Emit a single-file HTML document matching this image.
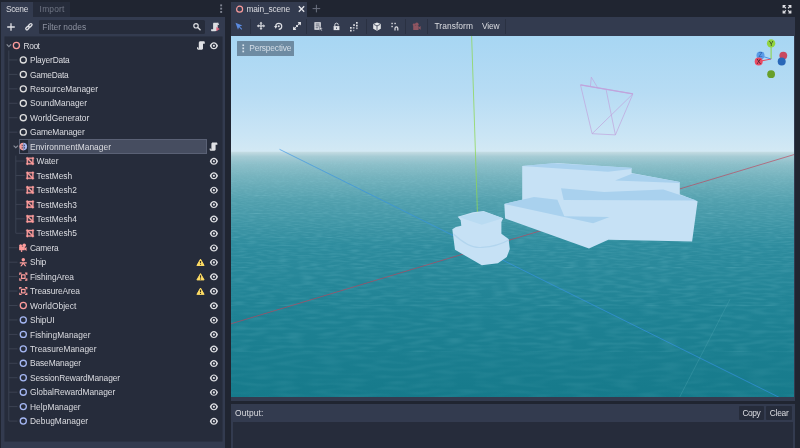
<!DOCTYPE html>
<html><head><meta charset="utf-8"><title>Godot Editor - main_scene</title>
<style>
html,body{margin:0;padding:0}
body{width:800px;height:448px;overflow:hidden;background:#202531;position:relative;font-family:"Liberation Sans",sans-serif;font-size:8.4px;color:#dcdde1;-webkit-font-smoothing:antialiased}
.abs{position:absolute}
div{position:absolute;box-sizing:border-box}
.t{white-space:nowrap;line-height:13px;height:13px;color:#dcdde2}
.dim{color:#7d8290}
</style></head><body>
<div id="app" style="left:0;top:0;width:800px;height:448px;will-change:transform">
<!-- LEFT DOCK -->
<div style="left:1px;top:2px;width:32px;height:15px;background:#333b4f"></div>
<div style="left:33px;top:2px;width:36.5px;height:14.7px;background:#262c3b"></div>
<div style="left:1px;top:16.5px;width:224px;height:431.5px;background:#333b4f"></div>
<div class="t" style="left:5.9px;top:3.3px;letter-spacing:-0.33px">Scene</div>
<div class="t dim" style="left:39.6px;top:3.3px;color:#6f7584;letter-spacing:0.208px">Import</div>
<!-- filter box -->
<div style="left:39px;top:19.5px;width:166px;height:14.5px;background:#262c3b;border-radius:1.5px"></div>
<div class="t" style="left:42.3px;top:20.85px;color:#8d92a0;letter-spacing:0.003px">Filter nodes</div>
<!-- tree -->
<div style="left:3.5px;top:36.3px;width:219.4px;height:406.2px;background:#262c3b;border:0.6px solid #2b3243;border-radius:1.5px"></div>
<div style="left:18.75px;top:138.87px;width:188.5px;height:14.7px;background:#464d60;border:0.7px solid #5a6175"></div><div style="left:20.2px;top:139.62px;width:7.7px;height:13.2px;background:#242a38"></div>
<svg class="abs" style="left:0;top:0" width="240" height="448" viewBox="0 0 240 448"><path d="M8.8 50.5V421.07" stroke="#414858" stroke-width="0.8" fill="none"/><path d="M8.8 59.95H17.5" stroke="#414858" stroke-width="0.8"/><path d="M8.8 74.39H17.5" stroke="#414858" stroke-width="0.8"/><path d="M8.8 88.84H17.5" stroke="#414858" stroke-width="0.8"/><path d="M8.8 103.28H17.5" stroke="#414858" stroke-width="0.8"/><path d="M8.8 117.72H17.5" stroke="#414858" stroke-width="0.8"/><path d="M8.8 132.17H17.5" stroke="#414858" stroke-width="0.8"/><path d="M15.8 161.06H24.8" stroke="#414858" stroke-width="0.8"/><path d="M15.8 175.5H24.8" stroke="#414858" stroke-width="0.8"/><path d="M15.8 189.95H24.8" stroke="#414858" stroke-width="0.8"/><path d="M15.8 204.4H24.8" stroke="#414858" stroke-width="0.8"/><path d="M15.8 218.84H24.8" stroke="#414858" stroke-width="0.8"/><path d="M15.8 233.28H24.8" stroke="#414858" stroke-width="0.8"/><path d="M8.8 247.73H17.5" stroke="#414858" stroke-width="0.8"/><path d="M8.8 262.18H17.5" stroke="#414858" stroke-width="0.8"/><path d="M8.8 276.62H17.5" stroke="#414858" stroke-width="0.8"/><path d="M8.8 291.06H17.5" stroke="#414858" stroke-width="0.8"/><path d="M8.8 305.51H17.5" stroke="#414858" stroke-width="0.8"/><path d="M8.8 319.95H17.5" stroke="#414858" stroke-width="0.8"/><path d="M8.8 334.4H17.5" stroke="#414858" stroke-width="0.8"/><path d="M8.8 348.85H17.5" stroke="#414858" stroke-width="0.8"/><path d="M8.8 363.29H17.5" stroke="#414858" stroke-width="0.8"/><path d="M8.8 377.74H17.5" stroke="#414858" stroke-width="0.8"/><path d="M8.8 392.18H17.5" stroke="#414858" stroke-width="0.8"/><path d="M8.8 406.62H17.5" stroke="#414858" stroke-width="0.8"/><path d="M8.8 421.07H17.5" stroke="#414858" stroke-width="0.8"/><path d="M15.8 155.62V233.28" stroke="#414858" stroke-width="0.8" fill="none"/><circle cx="16.4" cy="45.5" r="3.05" fill="none" stroke="#fc9c9c" stroke-width="1.3"/><g transform="translate(195.80,40.70) scale(0.6)"><path d="m6 1v1c-.55 0-1 .45-1 1v10h-1v-2h-2v2c0 .357.19.687.5.865.15.088.32.135.5.135v1h7c1.1 0 2-.9 2-2v-8h3v-2c0-1.1-.9-2-2-2z" fill="#e0e1e5"/></g><g transform="translate(209.26,41.06) scale(0.58)"><path d="m8 2c-3.08 0-5.83 2.2-6.95 5.64-.08.23-.08.49 0 .72 1.12 3.44 3.87 5.64 6.95 5.64s5.83-2.2 6.95-5.64c.08-.23.08-.49 0-.72-1.12-3.44-3.87-5.64-6.95-5.64zm0 2c2.21 0 4 1.79 4 4s-1.79 4-4 4-4-1.79-4-4 1.79-4 4-4zm0 2.2c-1 0-1.8.8-1.8 1.8s.8 1.8 1.8 1.8 1.8-.8 1.8-1.8-.8-1.8-1.8-1.8z" fill="#e0e1e5" fill-rule="evenodd"/></g><circle cx="23.3" cy="59.95" r="3.05" fill="none" stroke="#e0e0e0" stroke-width="1.3"/><circle cx="23.3" cy="74.39" r="3.05" fill="none" stroke="#e0e0e0" stroke-width="1.3"/><circle cx="23.3" cy="88.84" r="3.05" fill="none" stroke="#e0e0e0" stroke-width="1.3"/><circle cx="23.3" cy="103.28" r="3.05" fill="none" stroke="#e0e0e0" stroke-width="1.3"/><circle cx="23.3" cy="117.72" r="3.05" fill="none" stroke="#e0e0e0" stroke-width="1.3"/><circle cx="23.3" cy="132.17" r="3.05" fill="none" stroke="#e0e0e0" stroke-width="1.3"/><path d="M23.3 142.82a3.8 3.8 0 0 0 0 7.6z" fill="#f7a1a1"/><path d="M23.3 142.82a3.8 3.8 0 0 1 0 7.6z" fill="#a7b8f2"/><path d="M22.2 144.72v1.5M22.2 147.12v1.5M24.400000000000002 144.72v1.5M24.400000000000002 147.12v1.5" stroke="#3a3550" stroke-width="0.9" fill="none"/><g transform="translate(208.40,141.82) scale(0.6)"><path d="m6 1v1c-.55 0-1 .45-1 1v10h-1v-2h-2v2c0 .357.19.687.5.865.15.088.32.135.5.135v1h7c1.1 0 2-.9 2-2v-8h3v-2c0-1.1-.9-2-2-2z" fill="#e0e1e5"/></g><g transform="translate(25.70,156.66) scale(0.55)"><path d="m3 1a2 2 0 0 0 -2 2 2 2 0 0 0 1 1.73v6.54a2 2 0 0 0 -1 1.73 2 2 0 0 0 2 2 2 2 0 0 0 1.73-1h6.54a2 2 0 0 0 1.73 1 2 2 0 0 0 2-2 2 2 0 0 0 -1-1.73v-6.54a2 2 0 0 0 1-1.73 2 2 0 0 0 -2-2 2 2 0 0 0 -1.73 1h-6.54a2 2 0 0 0 -1.73-1zm8.27 3a2 2 0 0 0 .73.73v5.86l-6.59-6.59zm-7.27 1.41l6.59 6.59h-5.86a2 2 0 0 0 -.73-.73z" fill="#fc9c9c" fill-rule="evenodd" stroke="#fc9c9c" stroke-width="0.7" stroke-linejoin="round"/></g><g transform="translate(209.26,156.62) scale(0.58)"><path d="m8 2c-3.08 0-5.83 2.2-6.95 5.64-.08.23-.08.49 0 .72 1.12 3.44 3.87 5.64 6.95 5.64s5.83-2.2 6.95-5.64c.08-.23.08-.49 0-.72-1.12-3.44-3.87-5.64-6.95-5.64zm0 2c2.21 0 4 1.79 4 4s-1.79 4-4 4-4-1.79-4-4 1.79-4 4-4zm0 2.2c-1 0-1.8.8-1.8 1.8s.8 1.8 1.8 1.8 1.8-.8 1.8-1.8-.8-1.8-1.8-1.8z" fill="#e0e1e5" fill-rule="evenodd"/></g><g transform="translate(25.70,171.10) scale(0.55)"><path d="m3 1a2 2 0 0 0 -2 2 2 2 0 0 0 1 1.73v6.54a2 2 0 0 0 -1 1.73 2 2 0 0 0 2 2 2 2 0 0 0 1.73-1h6.54a2 2 0 0 0 1.73 1 2 2 0 0 0 2-2 2 2 0 0 0 -1-1.73v-6.54a2 2 0 0 0 1-1.73 2 2 0 0 0 -2-2 2 2 0 0 0 -1.73 1h-6.54a2 2 0 0 0 -1.73-1zm8.27 3a2 2 0 0 0 .73.73v5.86l-6.59-6.59zm-7.27 1.41l6.59 6.59h-5.86a2 2 0 0 0 -.73-.73z" fill="#fc9c9c" fill-rule="evenodd" stroke="#fc9c9c" stroke-width="0.7" stroke-linejoin="round"/></g><g transform="translate(209.26,171.06) scale(0.58)"><path d="m8 2c-3.08 0-5.83 2.2-6.95 5.64-.08.23-.08.49 0 .72 1.12 3.44 3.87 5.64 6.95 5.64s5.83-2.2 6.95-5.64c.08-.23.08-.49 0-.72-1.12-3.44-3.87-5.64-6.95-5.64zm0 2c2.21 0 4 1.79 4 4s-1.79 4-4 4-4-1.79-4-4 1.79-4 4-4zm0 2.2c-1 0-1.8.8-1.8 1.8s.8 1.8 1.8 1.8 1.8-.8 1.8-1.8-.8-1.8-1.8-1.8z" fill="#e0e1e5" fill-rule="evenodd"/></g><g transform="translate(25.70,185.55) scale(0.55)"><path d="m3 1a2 2 0 0 0 -2 2 2 2 0 0 0 1 1.73v6.54a2 2 0 0 0 -1 1.73 2 2 0 0 0 2 2 2 2 0 0 0 1.73-1h6.54a2 2 0 0 0 1.73 1 2 2 0 0 0 2-2 2 2 0 0 0 -1-1.73v-6.54a2 2 0 0 0 1-1.73 2 2 0 0 0 -2-2 2 2 0 0 0 -1.73 1h-6.54a2 2 0 0 0 -1.73-1zm8.27 3a2 2 0 0 0 .73.73v5.86l-6.59-6.59zm-7.27 1.41l6.59 6.59h-5.86a2 2 0 0 0 -.73-.73z" fill="#fc9c9c" fill-rule="evenodd" stroke="#fc9c9c" stroke-width="0.7" stroke-linejoin="round"/></g><g transform="translate(209.26,185.51) scale(0.58)"><path d="m8 2c-3.08 0-5.83 2.2-6.95 5.64-.08.23-.08.49 0 .72 1.12 3.44 3.87 5.64 6.95 5.64s5.83-2.2 6.95-5.64c.08-.23.08-.49 0-.72-1.12-3.44-3.87-5.64-6.95-5.64zm0 2c2.21 0 4 1.79 4 4s-1.79 4-4 4-4-1.79-4-4 1.79-4 4-4zm0 2.2c-1 0-1.8.8-1.8 1.8s.8 1.8 1.8 1.8 1.8-.8 1.8-1.8-.8-1.8-1.8-1.8z" fill="#e0e1e5" fill-rule="evenodd"/></g><g transform="translate(25.70,200.00) scale(0.55)"><path d="m3 1a2 2 0 0 0 -2 2 2 2 0 0 0 1 1.73v6.54a2 2 0 0 0 -1 1.73 2 2 0 0 0 2 2 2 2 0 0 0 1.73-1h6.54a2 2 0 0 0 1.73 1 2 2 0 0 0 2-2 2 2 0 0 0 -1-1.73v-6.54a2 2 0 0 0 1-1.73 2 2 0 0 0 -2-2 2 2 0 0 0 -1.73 1h-6.54a2 2 0 0 0 -1.73-1zm8.27 3a2 2 0 0 0 .73.73v5.86l-6.59-6.59zm-7.27 1.41l6.59 6.59h-5.86a2 2 0 0 0 -.73-.73z" fill="#fc9c9c" fill-rule="evenodd" stroke="#fc9c9c" stroke-width="0.7" stroke-linejoin="round"/></g><g transform="translate(209.26,199.96) scale(0.58)"><path d="m8 2c-3.08 0-5.83 2.2-6.95 5.64-.08.23-.08.49 0 .72 1.12 3.44 3.87 5.64 6.95 5.64s5.83-2.2 6.95-5.64c.08-.23.08-.49 0-.72-1.12-3.44-3.87-5.64-6.95-5.64zm0 2c2.21 0 4 1.79 4 4s-1.79 4-4 4-4-1.79-4-4 1.79-4 4-4zm0 2.2c-1 0-1.8.8-1.8 1.8s.8 1.8 1.8 1.8 1.8-.8 1.8-1.8-.8-1.8-1.8-1.8z" fill="#e0e1e5" fill-rule="evenodd"/></g><g transform="translate(25.70,214.44) scale(0.55)"><path d="m3 1a2 2 0 0 0 -2 2 2 2 0 0 0 1 1.73v6.54a2 2 0 0 0 -1 1.73 2 2 0 0 0 2 2 2 2 0 0 0 1.73-1h6.54a2 2 0 0 0 1.73 1 2 2 0 0 0 2-2 2 2 0 0 0 -1-1.73v-6.54a2 2 0 0 0 1-1.73 2 2 0 0 0 -2-2 2 2 0 0 0 -1.73 1h-6.54a2 2 0 0 0 -1.73-1zm8.27 3a2 2 0 0 0 .73.73v5.86l-6.59-6.59zm-7.27 1.41l6.59 6.59h-5.86a2 2 0 0 0 -.73-.73z" fill="#fc9c9c" fill-rule="evenodd" stroke="#fc9c9c" stroke-width="0.7" stroke-linejoin="round"/></g><g transform="translate(209.26,214.40) scale(0.58)"><path d="m8 2c-3.08 0-5.83 2.2-6.95 5.64-.08.23-.08.49 0 .72 1.12 3.44 3.87 5.64 6.95 5.64s5.83-2.2 6.95-5.64c.08-.23.08-.49 0-.72-1.12-3.44-3.87-5.64-6.95-5.64zm0 2c2.21 0 4 1.79 4 4s-1.79 4-4 4-4-1.79-4-4 1.79-4 4-4zm0 2.2c-1 0-1.8.8-1.8 1.8s.8 1.8 1.8 1.8 1.8-.8 1.8-1.8-.8-1.8-1.8-1.8z" fill="#e0e1e5" fill-rule="evenodd"/></g><g transform="translate(25.70,228.88) scale(0.55)"><path d="m3 1a2 2 0 0 0 -2 2 2 2 0 0 0 1 1.73v6.54a2 2 0 0 0 -1 1.73 2 2 0 0 0 2 2 2 2 0 0 0 1.73-1h6.54a2 2 0 0 0 1.73 1 2 2 0 0 0 2-2 2 2 0 0 0 -1-1.73v-6.54a2 2 0 0 0 1-1.73 2 2 0 0 0 -2-2 2 2 0 0 0 -1.73 1h-6.54a2 2 0 0 0 -1.73-1zm8.27 3a2 2 0 0 0 .73.73v5.86l-6.59-6.59zm-7.27 1.41l6.59 6.59h-5.86a2 2 0 0 0 -.73-.73z" fill="#fc9c9c" fill-rule="evenodd" stroke="#fc9c9c" stroke-width="0.7" stroke-linejoin="round"/></g><g transform="translate(209.26,228.84) scale(0.58)"><path d="m8 2c-3.08 0-5.83 2.2-6.95 5.64-.08.23-.08.49 0 .72 1.12 3.44 3.87 5.64 6.95 5.64s5.83-2.2 6.95-5.64c.08-.23.08-.49 0-.72-1.12-3.44-3.87-5.64-6.95-5.64zm0 2c2.21 0 4 1.79 4 4s-1.79 4-4 4-4-1.79-4-4 1.79-4 4-4zm0 2.2c-1 0-1.8.8-1.8 1.8s.8 1.8 1.8 1.8 1.8-.8 1.8-1.8-.8-1.8-1.8-1.8z" fill="#e0e1e5" fill-rule="evenodd"/></g><g transform="translate(18.50,242.93) scale(0.6)"><g fill="#fc9c9c"><circle cx="9.5" cy="4" r="3"/><circle cx="3.5" cy="4.5" r="2.5"/><rect x="1" y="6" width="9.4" height="6.4" rx="1"/><path d="M10 9l3.4-2.4v6.8l-3.4-2.4z"/><rect x="4" y="12" width="2.2" height="3"/></g></g><g transform="translate(209.26,243.29) scale(0.58)"><path d="m8 2c-3.08 0-5.83 2.2-6.95 5.64-.08.23-.08.49 0 .72 1.12 3.44 3.87 5.64 6.95 5.64s5.83-2.2 6.95-5.64c.08-.23.08-.49 0-.72-1.12-3.44-3.87-5.64-6.95-5.64zm0 2c2.21 0 4 1.79 4 4s-1.79 4-4 4-4-1.79-4-4 1.79-4 4-4zm0 2.2c-1 0-1.8.8-1.8 1.8s.8 1.8 1.8 1.8 1.8-.8 1.8-1.8-.8-1.8-1.8-1.8z" fill="#e0e1e5" fill-rule="evenodd"/></g><g transform="translate(18.66,257.54) scale(0.58)"><path d="m8 1a3 3 0 0 0 -3 3 3 3 0 0 0 3 3 3 3 0 0 0 3-3 3 3 0 0 0 -3-3zm-6 7.2v2h4.2l-3.6 4.8h2.6l2.8-3.8 2.8 3.8h2.6l-3.6-4.8h4.2v-2z" fill="#fc9c9c"/></g><path d="M200.5 259.18L204.1 265.48H196.9Z" fill="#ffdd65" stroke="#ffdd65" stroke-width="1" stroke-linejoin="round"/><path d="M200.5 260.88V263.28000000000003M200.5 264.18v0.9" stroke="#3a3422" stroke-width="1.1"/><g transform="translate(209.26,257.74) scale(0.58)"><path d="m8 2c-3.08 0-5.83 2.2-6.95 5.64-.08.23-.08.49 0 .72 1.12 3.44 3.87 5.64 6.95 5.64s5.83-2.2 6.95-5.64c.08-.23.08-.49 0-.72-1.12-3.44-3.87-5.64-6.95-5.64zm0 2c2.21 0 4 1.79 4 4s-1.79 4-4 4-4-1.79-4-4 1.79-4 4-4zm0 2.2c-1 0-1.8.8-1.8 1.8s.8 1.8 1.8 1.8 1.8-.8 1.8-1.8-.8-1.8-1.8-1.8z" fill="#e0e1e5" fill-rule="evenodd"/></g><g transform="translate(18.66,271.98) scale(0.58)"><path d="m1 1v4h2v-2h2v-2zm10 0v2h2v2h2v-4zm-7 3v8h8v-8zm2 2h4v4h-4zm-5 5v4h4v-2h-2v-2zm12 0v2h-2v2h4v-4z" fill="#fc9c9c" fill-rule="evenodd"/></g><path d="M200.5 273.62L204.1 279.92H196.9Z" fill="#ffdd65" stroke="#ffdd65" stroke-width="1" stroke-linejoin="round"/><path d="M200.5 275.32V277.72M200.5 278.62v0.9" stroke="#3a3422" stroke-width="1.1"/><g transform="translate(209.26,272.18) scale(0.58)"><path d="m8 2c-3.08 0-5.83 2.2-6.95 5.64-.08.23-.08.49 0 .72 1.12 3.44 3.87 5.64 6.95 5.64s5.83-2.2 6.95-5.64c.08-.23.08-.49 0-.72-1.12-3.44-3.87-5.64-6.95-5.64zm0 2c2.21 0 4 1.79 4 4s-1.79 4-4 4-4-1.79-4-4 1.79-4 4-4zm0 2.2c-1 0-1.8.8-1.8 1.8s.8 1.8 1.8 1.8 1.8-.8 1.8-1.8-.8-1.8-1.8-1.8z" fill="#e0e1e5" fill-rule="evenodd"/></g><g transform="translate(18.66,286.42) scale(0.58)"><path d="m1 1v4h2v-2h2v-2zm10 0v2h2v2h2v-4zm-7 3v8h8v-8zm2 2h4v4h-4zm-5 5v4h4v-2h-2v-2zm12 0v2h-2v2h4v-4z" fill="#fc9c9c" fill-rule="evenodd"/></g><path d="M200.5 288.06L204.1 294.36H196.9Z" fill="#ffdd65" stroke="#ffdd65" stroke-width="1" stroke-linejoin="round"/><path d="M200.5 289.76V292.16M200.5 293.06v0.9" stroke="#3a3422" stroke-width="1.1"/><g transform="translate(209.26,286.62) scale(0.58)"><path d="m8 2c-3.08 0-5.83 2.2-6.95 5.64-.08.23-.08.49 0 .72 1.12 3.44 3.87 5.64 6.95 5.64s5.83-2.2 6.95-5.64c.08-.23.08-.49 0-.72-1.12-3.44-3.87-5.64-6.95-5.64zm0 2c2.21 0 4 1.79 4 4s-1.79 4-4 4-4-1.79-4-4 1.79-4 4-4zm0 2.2c-1 0-1.8.8-1.8 1.8s.8 1.8 1.8 1.8 1.8-.8 1.8-1.8-.8-1.8-1.8-1.8z" fill="#e0e1e5" fill-rule="evenodd"/></g><circle cx="23.3" cy="305.51" r="3.05" fill="none" stroke="#fc9c9c" stroke-width="1.3"/><g transform="translate(209.26,301.07) scale(0.58)"><path d="m8 2c-3.08 0-5.83 2.2-6.95 5.64-.08.23-.08.49 0 .72 1.12 3.44 3.87 5.64 6.95 5.64s5.83-2.2 6.95-5.64c.08-.23.08-.49 0-.72-1.12-3.44-3.87-5.64-6.95-5.64zm0 2c2.21 0 4 1.79 4 4s-1.79 4-4 4-4-1.79-4-4 1.79-4 4-4zm0 2.2c-1 0-1.8.8-1.8 1.8s.8 1.8 1.8 1.8 1.8-.8 1.8-1.8-.8-1.8-1.8-1.8z" fill="#e0e1e5" fill-rule="evenodd"/></g><circle cx="23.3" cy="319.95" r="3.05" fill="none" stroke="#a5b7f3" stroke-width="1.3"/><g transform="translate(209.26,315.51) scale(0.58)"><path d="m8 2c-3.08 0-5.83 2.2-6.95 5.64-.08.23-.08.49 0 .72 1.12 3.44 3.87 5.64 6.95 5.64s5.83-2.2 6.95-5.64c.08-.23.08-.49 0-.72-1.12-3.44-3.87-5.64-6.95-5.64zm0 2c2.21 0 4 1.79 4 4s-1.79 4-4 4-4-1.79-4-4 1.79-4 4-4zm0 2.2c-1 0-1.8.8-1.8 1.8s.8 1.8 1.8 1.8 1.8-.8 1.8-1.8-.8-1.8-1.8-1.8z" fill="#e0e1e5" fill-rule="evenodd"/></g><circle cx="23.3" cy="334.4" r="3.05" fill="none" stroke="#a5b7f3" stroke-width="1.3"/><g transform="translate(209.26,329.96) scale(0.58)"><path d="m8 2c-3.08 0-5.83 2.2-6.95 5.64-.08.23-.08.49 0 .72 1.12 3.44 3.87 5.64 6.95 5.64s5.83-2.2 6.95-5.64c.08-.23.08-.49 0-.72-1.12-3.44-3.87-5.64-6.95-5.64zm0 2c2.21 0 4 1.79 4 4s-1.79 4-4 4-4-1.79-4-4 1.79-4 4-4zm0 2.2c-1 0-1.8.8-1.8 1.8s.8 1.8 1.8 1.8 1.8-.8 1.8-1.8-.8-1.8-1.8-1.8z" fill="#e0e1e5" fill-rule="evenodd"/></g><circle cx="23.3" cy="348.85" r="3.05" fill="none" stroke="#a5b7f3" stroke-width="1.3"/><g transform="translate(209.26,344.41) scale(0.58)"><path d="m8 2c-3.08 0-5.83 2.2-6.95 5.64-.08.23-.08.49 0 .72 1.12 3.44 3.87 5.64 6.95 5.64s5.83-2.2 6.95-5.64c.08-.23.08-.49 0-.72-1.12-3.44-3.87-5.64-6.95-5.64zm0 2c2.21 0 4 1.79 4 4s-1.79 4-4 4-4-1.79-4-4 1.79-4 4-4zm0 2.2c-1 0-1.8.8-1.8 1.8s.8 1.8 1.8 1.8 1.8-.8 1.8-1.8-.8-1.8-1.8-1.8z" fill="#e0e1e5" fill-rule="evenodd"/></g><circle cx="23.3" cy="363.29" r="3.05" fill="none" stroke="#a5b7f3" stroke-width="1.3"/><g transform="translate(209.26,358.85) scale(0.58)"><path d="m8 2c-3.08 0-5.83 2.2-6.95 5.64-.08.23-.08.49 0 .72 1.12 3.44 3.87 5.64 6.95 5.64s5.83-2.2 6.95-5.64c.08-.23.08-.49 0-.72-1.12-3.44-3.87-5.64-6.95-5.64zm0 2c2.21 0 4 1.79 4 4s-1.79 4-4 4-4-1.79-4-4 1.79-4 4-4zm0 2.2c-1 0-1.8.8-1.8 1.8s.8 1.8 1.8 1.8 1.8-.8 1.8-1.8-.8-1.8-1.8-1.8z" fill="#e0e1e5" fill-rule="evenodd"/></g><circle cx="23.3" cy="377.74" r="3.05" fill="none" stroke="#a5b7f3" stroke-width="1.3"/><g transform="translate(209.26,373.30) scale(0.58)"><path d="m8 2c-3.08 0-5.83 2.2-6.95 5.64-.08.23-.08.49 0 .72 1.12 3.44 3.87 5.64 6.95 5.64s5.83-2.2 6.95-5.64c.08-.23.08-.49 0-.72-1.12-3.44-3.87-5.64-6.95-5.64zm0 2c2.21 0 4 1.79 4 4s-1.79 4-4 4-4-1.79-4-4 1.79-4 4-4zm0 2.2c-1 0-1.8.8-1.8 1.8s.8 1.8 1.8 1.8 1.8-.8 1.8-1.8-.8-1.8-1.8-1.8z" fill="#e0e1e5" fill-rule="evenodd"/></g><circle cx="23.3" cy="392.18" r="3.05" fill="none" stroke="#a5b7f3" stroke-width="1.3"/><g transform="translate(209.26,387.74) scale(0.58)"><path d="m8 2c-3.08 0-5.83 2.2-6.95 5.64-.08.23-.08.49 0 .72 1.12 3.44 3.87 5.64 6.95 5.64s5.83-2.2 6.95-5.64c.08-.23.08-.49 0-.72-1.12-3.44-3.87-5.64-6.95-5.64zm0 2c2.21 0 4 1.79 4 4s-1.79 4-4 4-4-1.79-4-4 1.79-4 4-4zm0 2.2c-1 0-1.8.8-1.8 1.8s.8 1.8 1.8 1.8 1.8-.8 1.8-1.8-.8-1.8-1.8-1.8z" fill="#e0e1e5" fill-rule="evenodd"/></g><circle cx="23.3" cy="406.62" r="3.05" fill="none" stroke="#a5b7f3" stroke-width="1.3"/><g transform="translate(209.26,402.18) scale(0.58)"><path d="m8 2c-3.08 0-5.83 2.2-6.95 5.64-.08.23-.08.49 0 .72 1.12 3.44 3.87 5.64 6.95 5.64s5.83-2.2 6.95-5.64c.08-.23.08-.49 0-.72-1.12-3.44-3.87-5.64-6.95-5.64zm0 2c2.21 0 4 1.79 4 4s-1.79 4-4 4-4-1.79-4-4 1.79-4 4-4zm0 2.2c-1 0-1.8.8-1.8 1.8s.8 1.8 1.8 1.8 1.8-.8 1.8-1.8-.8-1.8-1.8-1.8z" fill="#e0e1e5" fill-rule="evenodd"/></g><circle cx="23.3" cy="421.07" r="3.05" fill="none" stroke="#a5b7f3" stroke-width="1.3"/><g transform="translate(209.26,416.63) scale(0.58)"><path d="m8 2c-3.08 0-5.83 2.2-6.95 5.64-.08.23-.08.49 0 .72 1.12 3.44 3.87 5.64 6.95 5.64s5.83-2.2 6.95-5.64c.08-.23.08-.49 0-.72-1.12-3.44-3.87-5.64-6.95-5.64zm0 2c2.21 0 4 1.79 4 4s-1.79 4-4 4-4-1.79-4-4 1.79-4 4-4zm0 2.2c-1 0-1.8.8-1.8 1.8s.8 1.8 1.8 1.8 1.8-.8 1.8-1.8-.8-1.8-1.8-1.8z" fill="#e0e1e5" fill-rule="evenodd"/></g><path d="M6.7 44.4L8.9 46.6L11.100000000000001 44.4" stroke="#8a8f9b" stroke-width="1.1" fill="none"/><path d="M13.600000000000001 145.52L15.8 147.72L18.0 145.52" stroke="#8a8f9b" stroke-width="1.1" fill="none"/></svg>
<div class="t" style="left:23.6px;top:39.70px;letter-spacing:-0.451px">Root</div>
<div class="t" style="left:30.0px;top:54.15px;letter-spacing:-0.184px">PlayerData</div>
<div class="t" style="left:30.0px;top:68.59px;letter-spacing:-0.263px">GameData</div>
<div class="t" style="left:30.0px;top:83.04px;letter-spacing:-0.067px">ResourceManager</div>
<div class="t" style="left:30.0px;top:97.48px;letter-spacing:-0.023px">SoundManager</div>
<div class="t" style="left:30.0px;top:111.92px;letter-spacing:-0.01px">WorldGenerator</div>
<div class="t" style="left:30.0px;top:126.37px;letter-spacing:-0.116px">GameManager</div>
<div class="t" style="left:30.0px;top:140.82px;letter-spacing:0.057px">EnvironmentManager</div>
<div class="t" style="left:36.6px;top:155.26px;letter-spacing:-0.046px">Water</div>
<div class="t" style="left:36.6px;top:169.70px;letter-spacing:-0.043px">TestMesh</div>
<div class="t" style="left:36.6px;top:184.15px;letter-spacing:-0.033px">TestMesh2</div>
<div class="t" style="left:36.6px;top:198.60px;letter-spacing:-0.033px">TestMesh3</div>
<div class="t" style="left:36.6px;top:213.04px;letter-spacing:-0.033px">TestMesh4</div>
<div class="t" style="left:36.6px;top:227.48px;letter-spacing:-0.033px">TestMesh5</div>
<div class="t" style="left:30.0px;top:241.93px;letter-spacing:-0.233px">Camera</div>
<div class="t" style="left:30.0px;top:256.38px;letter-spacing:-0.166px">Ship</div>
<div class="t" style="left:30.0px;top:270.82px;letter-spacing:-0.073px">FishingArea</div>
<div class="t" style="left:30.0px;top:285.26px;letter-spacing:-0.092px">TreasureArea</div>
<div class="t" style="left:30.0px;top:299.71px;letter-spacing:0.042px">WorldObject</div>
<div class="t" style="left:30.0px;top:314.15px;letter-spacing:-0.107px">ShipUI</div>
<div class="t" style="left:30.0px;top:328.60px;letter-spacing:0.031px">FishingManager</div>
<div class="t" style="left:30.0px;top:343.05px;letter-spacing:0.022px">TreasureManager</div>
<div class="t" style="left:30.0px;top:357.49px;letter-spacing:-0.114px">BaseManager</div>
<div class="t" style="left:30.0px;top:371.94px;letter-spacing:-0.086px">SessionRewardManager</div>
<div class="t" style="left:30.0px;top:386.38px;letter-spacing:-0.049px">GlobalRewardManager</div>
<div class="t" style="left:30.0px;top:400.82px;letter-spacing:0.038px">HelpManager</div>
<div class="t" style="left:30.0px;top:415.27px;letter-spacing:0.039px">DebugManager</div>
<svg class="abs" style="left:0;top:0" width="240" height="40" viewBox="0 0 240 40">
 <!-- plus -->
 <path d="M7.2 27h7.6M11 23.2v7.6" stroke="#e0e1e6" stroke-width="1.3" fill="none"/>
 <!-- chain -->
 <g fill="none" stroke="#e0e1e6" stroke-width="1.6" stroke-linecap="round" transform="translate(28.9,27) scale(0.82) translate(-29.2,-27.2)"><path d="M26.6 28.8l1.4-1.4a1.4 1.4 0 0 1 2 2l-1.4 1.4a1.4 1.4 0 0 1-2-2z" transform="translate(-0.8,-0.6)"/><path d="M30 25.2l1.4-1.4a1.4 1.4 0 0 1 2 2l-1.4 1.4a1.4 1.4 0 0 1-2-2z" transform="translate(-0.8,-0.4)"/></g>
 <!-- search -->
 <circle cx="196" cy="25.8" r="2.2" fill="none" stroke="#dcdde1" stroke-width="1.2"/><path d="M197.8 27.6l2.3 2.2" stroke="#dcdde1" stroke-width="1.4" stroke-linecap="round"/>
 <!-- dots -->
 <g fill="#7f8491"><rect x="220.2" y="4.4" width="1.9" height="1.9"/><rect x="220.2" y="7.7" width="1.9" height="1.9"/><rect x="220.2" y="11" width="1.9" height="1.9"/></g>
 <!-- script attach -->
 <g transform="translate(0.7,0.2)">
 <path d="M212.6 22.6h5.4q-1 0.4 -1 1.6v4.4q0 2.4 -2.4 2.4h-3.6q-0.6 0 -0.6-0.6v-1.3h2v-4.9q0-1.6 0.4-1.6z" fill="#dcdde1"/>
 <path d="M216.6 22.6q1.6 0 1.6 1.6v0.5h-1.6z" fill="#dcdde1"/>
 <path d="M216 27.2l2.6 1.6l-2.6 1.6z" fill="#e0607a" stroke="#e0607a" stroke-width="0.6" stroke-linejoin="round"/>
 </g>
</svg>

<!-- RIGHT: main panel -->
<div style="left:230.6px;top:2px;width:76.4px;height:15px;background:#333b4f"></div>
<div style="left:230.6px;top:16.5px;width:564.6px;height:384.5px;background:#333b4f"></div>
<div class="t" style="left:246.4px;top:3.2px;letter-spacing:-0.147px">main_scene</div>
<div class="t" style="left:434.4px;top:19.8px;letter-spacing:0.082px">Transform</div>
<div class="t" style="left:482.1px;top:19.8px;letter-spacing:-0.191px">View</div>
<!-- separators -->
<div style="left:250px;top:19px;width:0.8px;height:15px;background:#2a3142"></div>
<div style="left:306.4px;top:19px;width:0.8px;height:15px;background:#2a3142"></div>
<div style="left:365.6px;top:19px;width:0.8px;height:15px;background:#2a3142"></div>
<div style="left:405.2px;top:19px;width:0.8px;height:15px;background:#2a3142"></div>
<div style="left:427.1px;top:19px;width:0.8px;height:15px;background:#2a3142"></div>
<div style="left:505.1px;top:19px;width:0.8px;height:15px;background:#2a3142"></div>
<svg class="abs" style="left:225px;top:0" width="575" height="36" viewBox="225 0 575 36">
 <!-- tab icon + close + plus -->
 <circle cx="239.6" cy="9.2" r="3" fill="none" stroke="#fc9c9c" stroke-width="1.2"/>
 <path d="M298.8 6.3l5.4 5.4M304.2 6.3l-5.4 5.4" stroke="#e4e5ea" stroke-width="1.3"/>
 <path d="M312.6 8.6h7.6M316.4 4.8v7.6" stroke="#6c7180" stroke-width="1"/>
 <!-- fullscreen icon -->
 <g fill="#e0e1e6" transform="translate(1,0.4)"><path d="M781.6 4.6h3v1.1l-0.9 0.1 1.6 1.6-0.9 0.9-1.6-1.6-0.1 0.9h-1.1z"/><path d="M790.4 4.6h-3v1.1l0.9 0.1-1.6 1.6 0.9 0.9 1.6-1.6 0.1 0.9h1.1z"/><path d="M781.6 13.2h3v-1.1l-0.9-0.1 1.6-1.6-0.9-0.9-1.6 1.6-0.1-0.9h-1.1z"/><path d="M790.4 13.2h-3v-1.1l0.9-0.1-1.6-1.6 0.9-0.9 1.6 1.6 0.1-0.9h1.1z"/></g>
 <!-- select arrow -->
 <path transform="translate(235,22.3) scale(0.5)" d="M1 1l5 14 2-5.2 5 5 1.4-1.4-5-5 5.2-2z" fill="#5b8be0"/>
 <!-- move -->
 <g transform="translate(256.2,21.1) scale(0.6)" fill="#e0e1e6"><path d="M8 1l2.6 3.2h-5.2zM8 15l2.6-3.2h-5.2zM1 8l3.2-2.6v5.2zM15 8l-3.2-2.6v5.2zM7.1 4h1.8v8h-1.8zM4 7.1h8v1.8h-8z"/><rect x="6.3" y="6.3" width="3.4" height="3.4"/><rect x="7.3" y="7.3" width="1.4" height="1.4" fill="#333b4f"/></g>
 <!-- rotate -->
 <g transform="translate(273.95,21.5) scale(0.6)" fill="#e0e1e6"><path d="M8 2a6 6 0 0 0-6 6h2a4 4 0 0 1 4-4 4 4 0 0 1 4 4 4 4 0 0 1-4 4v2a6 6 0 0 0 6-6 6 6 0 0 0-6-6z"/><path d="M0.2 7.6h5.6l-2.8 4.4z"/><circle cx="8" cy="8" r="1.7"/></g>
 <!-- scale -->
 <g transform="translate(292.2,21.2) scale(0.6)" fill="#e0e1e6"><path d="M9 1.4h5.6v5.6l-1.9-1.9-1.7 1.7-1.8-1.8 1.7-1.7zM7 14.6h-5.6v-5.6l1.9 1.9 1.7-1.7 1.8 1.8-1.7 1.7z"/><rect x="6.4" y="6.4" width="3.2" height="3.2"/></g>
 <!-- list select -->
 <g><rect x="314.4" y="22.2" width="6.4" height="7.6" fill="#e0e1e6"/><path d="M315.6 24h4M315.6 25.9h4M315.6 27.8h2.6" stroke="#333b4f" stroke-width="0.8" fill="none"/><path d="M319.2 26.8l3.6 1.5-1.5 0.6 1 1.4-0.8 0.6-1-1.4-0.9 1.2z" fill="#e0e1e6" stroke="#333b4f" stroke-width="0.5"/></g>
 <!-- lock -->
 <g transform="translate(336.6,26.6) scale(0.88) translate(-336,-27)"><rect x="332.6" y="26.4" width="6.6" height="4.6" fill="#dfe0e5"/><path d="M334 26.4v-1.4a1.9 1.9 0 0 1 3.8 0v0.6" fill="none" stroke="#dfe0e5" stroke-width="1.1"/><rect x="335.4" y="28" width="1" height="1.6" fill="#333b4f"/></g>
 <!-- group -->
 <g fill="#dfe0e5"><rect x="350" y="27" width="1.7" height="1.7"/><rect x="350" y="29.8" width="1.7" height="1.7"/><rect x="352.8" y="27" width="1.7" height="1.7" opacity="0.7"/><rect x="353.2" y="24.2" width="1.7" height="1.7"/><rect x="356" y="22" width="1.7" height="1.7"/><rect x="356" y="24.8" width="1.7" height="1.7"/><rect x="356" y="27.4" width="1.7" height="1.7" opacity="0.7"/><rect x="353" y="29.8" width="1.4" height="1.4" opacity="0.6"/></g>
 <!-- cube -->
 <g><path d="M377 22.4l3.8 1.7v4.6l-3.8 2-3.8-2v-4.6z" fill="#e6e7ea"/><path d="M373.8 24.4l3.2 1.5 3.2-1.5M377 25.9v4" stroke="#333b4f" stroke-width="0.8" fill="none"/></g>
 <!-- snap -->
 <g fill="#dfe0e5"><rect x="391.4" y="22.8" width="1.4" height="1.4"/><rect x="394.4" y="22.8" width="1.4" height="1.4"/><rect x="391.4" y="25.8" width="1.4" height="1.4"/><path d="M394.4 30.4v-2.2a2 2 0 0 1 4 0v2.2h-1.2v-2.2a0.8 0.8 0 0 0-1.6 0v2.2z"/></g>
 <!-- camera override (dim red) -->
 <g fill="#8f5561" transform="translate(-1.2,0)"><circle cx="418" cy="24.2" r="1.8"/><circle cx="415.2" cy="24.8" r="1.3"/><rect x="414.4" y="25.4" width="5.4" height="4.6" rx="0.6"/><path d="M419.4 27.8l2.4-1.8v3.8z"/></g>
</svg>

<!-- VIEWPORT -->
<div style="left:231px;top:35.7px;width:562.5px;height:361.6px;overflow:hidden;background:#1a8494">
<svg class="abs" style="left:0;top:0" width="562.5" height="361.6" viewBox="231 35.7 562.5 361.6">
 <defs>
  <linearGradient id="sky" x1="0" y1="0" x2="0" y2="1">
   <stop offset="0" stop-color="#a7d6f3"/><stop offset="0.5" stop-color="#b7dcf4"/><stop offset="0.85" stop-color="#cae5f5"/><stop offset="1" stop-color="#d3e9f4"/>
  </linearGradient>
  <linearGradient id="sea" x1="0" y1="0" x2="0" y2="1">
   <stop offset="0" stop-color="#c6dde4"/><stop offset="0.02" stop-color="#a5cbd4"/><stop offset="0.05" stop-color="#8dbfc9"/><stop offset="0.1" stop-color="#76b3be"/><stop offset="0.2" stop-color="#52a0ae"/><stop offset="0.38" stop-color="#2e8c9e"/><stop offset="0.65" stop-color="#1f8294"/><stop offset="1" stop-color="#167a8b"/>
  </linearGradient>
 </defs>
 <rect x="231" y="35" width="563" height="117" fill="url(#sky)"/>
 <rect x="231" y="151.4" width="563" height="246" fill="url(#sea)"/>
 <defs><filter id="rp0" x="0" y="0" width="100%" height="100%" color-interpolation-filters="sRGB"><feTurbulence type="fractalNoise" baseFrequency="0.900 1.800" numOctaves="1" seed="2"/><feColorMatrix type="matrix" values="0 0 0 0 0.62  0 0 0 0 0.86  0 0 0 0 0.9  2.2 0 0 0 -0.9"/></filter><filter id="rp1" x="0" y="0" width="100%" height="100%" color-interpolation-filters="sRGB"><feTurbulence type="fractalNoise" baseFrequency="0.614 1.800" numOctaves="1" seed="3"/><feColorMatrix type="matrix" values="0 0 0 0 0.62  0 0 0 0 0.86  0 0 0 0 0.9  2.2 0 0 0 -0.9"/></filter><filter id="rp2" x="0" y="0" width="100%" height="100%" color-interpolation-filters="sRGB"><feTurbulence type="fractalNoise" baseFrequency="0.393 1.800" numOctaves="1" seed="4"/><feColorMatrix type="matrix" values="0 0 0 0 0.62  0 0 0 0 0.86  0 0 0 0 0.9  2.2 0 0 0 -0.9"/></filter><filter id="rp3" x="0" y="0" width="100%" height="100%" color-interpolation-filters="sRGB"><feTurbulence type="fractalNoise" baseFrequency="0.266 1.593" numOctaves="1" seed="5"/><feColorMatrix type="matrix" values="0 0 0 0 0.62  0 0 0 0 0.86  0 0 0 0 0.9  2.2 0 0 0 -0.9"/></filter><filter id="rp4" x="0" y="0" width="100%" height="100%" color-interpolation-filters="sRGB"><feTurbulence type="fractalNoise" baseFrequency="0.185 1.112" numOctaves="1" seed="6"/><feColorMatrix type="matrix" values="0 0 0 0 0.62  0 0 0 0 0.86  0 0 0 0 0.9  2.2 0 0 0 -0.9"/></filter><filter id="rp5" x="0" y="0" width="100%" height="100%" color-interpolation-filters="sRGB"><feTurbulence type="fractalNoise" baseFrequency="0.133 0.797" numOctaves="1" seed="7"/><feColorMatrix type="matrix" values="0 0 0 0 0.62  0 0 0 0 0.86  0 0 0 0 0.9  2.2 0 0 0 -0.9"/></filter><filter id="rp6" x="0" y="0" width="100%" height="100%" color-interpolation-filters="sRGB"><feTurbulence type="fractalNoise" baseFrequency="0.097 0.584" numOctaves="1" seed="8"/><feColorMatrix type="matrix" values="0 0 0 0 0.62  0 0 0 0 0.86  0 0 0 0 0.9  2.2 0 0 0 -0.9"/></filter><filter id="rp7" x="0" y="0" width="100%" height="100%" color-interpolation-filters="sRGB"><feTurbulence type="fractalNoise" baseFrequency="0.073 0.437" numOctaves="1" seed="9"/><feColorMatrix type="matrix" values="0 0 0 0 0.62  0 0 0 0 0.86  0 0 0 0 0.9  2.2 0 0 0 -0.9"/></filter><filter id="rp8" x="0" y="0" width="100%" height="100%" color-interpolation-filters="sRGB"><feTurbulence type="fractalNoise" baseFrequency="0.056 0.333" numOctaves="1" seed="10"/><feColorMatrix type="matrix" values="0 0 0 0 0.62  0 0 0 0 0.86  0 0 0 0 0.9  2.2 0 0 0 -0.9"/></filter><filter id="rp9" x="0" y="0" width="100%" height="100%" color-interpolation-filters="sRGB"><feTurbulence type="fractalNoise" baseFrequency="0.044 0.264" numOctaves="1" seed="11"/><feColorMatrix type="matrix" values="0 0 0 0 0.62  0 0 0 0 0.86  0 0 0 0 0.9  2.2 0 0 0 -0.9"/></filter></defs><rect x="231" y="157.4" width="563" height="6.3" filter="url(#rp0)" opacity="0.10"/><rect x="231" y="163.4" width="563" height="8.3" filter="url(#rp1)" opacity="0.11"/><rect x="231" y="171.4" width="563" height="10.3" filter="url(#rp2)" opacity="0.12"/><rect x="231" y="181.4" width="563" height="14.3" filter="url(#rp3)" opacity="0.14"/><rect x="231" y="195.4" width="563" height="18.3" filter="url(#rp4)" opacity="0.15"/><rect x="231" y="213.4" width="563" height="24.3" filter="url(#rp5)" opacity="0.17"/><rect x="231" y="237.4" width="563" height="30.3" filter="url(#rp6)" opacity="0.17"/><rect x="231" y="267.4" width="563" height="38.3" filter="url(#rp7)" opacity="0.16"/><rect x="231" y="305.4" width="563" height="46.3" filter="url(#rp8)" opacity="0.13"/><rect x="231" y="351.4" width="563" height="46.3" filter="url(#rp9)" opacity="0.09"/>
 <!-- axis lines -->
 <path d="M471.6 35L477.4 212" stroke="#8dd656" stroke-width="0.85" fill="none" opacity="0.9"/>
 <path d="M279.5 149L779 397" stroke="#3592e6" stroke-width="0.8" fill="none" opacity="0.8"/>
 <path d="M231 323.5L795 154" stroke="#c04058" stroke-width="0.8" fill="none" opacity="0.8"/>
 <path d="M730 299L679 398" stroke="#55aab6" stroke-width="0.8" fill="none" opacity="0.4"/>
 <!-- camera gizmo -->
 <g fill="none" stroke="#c0a4dc" stroke-width="0.7">
  <path d="M580.5 84.6L632.9 93.6L615.4 134.6L592.1 133.4Z"/><path d="M592.1 133.4L632.9 93.6M606.1 89.3L615.4 134.6"/><path d="M590.4 86.4L591.3 76.8L598 88"/><path d="M580.5 84.6L632.9 93.6" stroke-width="1.2"/>
 </g>
 <!-- island -->
 <path d="M522.2 165.7L557.4 162.7L631.6 167.6L631.6 172.6L679.8 181.6L679.8 194L697.6 200.9L692.1 241.3L608.3 239.4L589 248.2L505.1 218.2L504.3 203.6L522.2 199.5Z" fill="#c6e1f5"/>
 <g fill="#a9d1ee">
  <path d="M522.1 165.7L552.9 163L631.8 167.5L631.6 168.6L608 171.4Z"/>
  <path d="M615.1 180.3L632.5 173.1L679.8 181.6L679.8 182.6Z"/>
  <path d="M561 188L604.1 191.8L663.3 189.3L696.8 200.3L563.7 199.7Z"/>
  <path d="M504.3 203.6L534 196.8L557.4 199.5L564.3 216L609.6 216.8L593.1 222.9Z"/>
 </g>
 <!-- ship -->
 <path d="M457.7 216.4L472.9 212L483.6 210.7L503.2 217.9L501.4 221.8L501.4 233.4L508.6 238.8L509.8 248.6L506.8 256.6L497.9 262.9L481.8 265L455 249.5L452.3 228.9L455.9 226.8L461.3 225.4L460.7 220Z" fill="#c6e1f5"/>
 <path d="M458.5 216.4L483.6 211.1L502.8 217.9L481.8 224.5L466 219.2Z" fill="#b9dbf2"/>
 <path d="M453.2 233.4Q470 249 482 247Q498 246 508.6 239.6" fill="none" stroke="#b2d5ee" stroke-width="1.2"/>
</svg>
<!-- perspective button -->
<div style="left:5.9px;top:5.5px;width:57.6px;height:14.4px;background:rgba(72,92,112,0.62);border-radius:0.6px"></div>
<div class="t" style="left:18.2px;top:6.2px;color:#d3dde7;letter-spacing:-0.142px">Perspective</div>
<svg class="abs" style="left:0.5px;top:0.3px" width="80" height="30" viewBox="0 0 80 30"><g fill="#d7e2ec"><rect x="10.4" y="8.4" width="1.7" height="1.7"/><rect x="10.4" y="11.5" width="1.7" height="1.7"/><rect x="10.4" y="14.6" width="1.7" height="1.7"/></g></svg>
<!-- gizmo -->
<svg class="abs" style="left:510.5px;top:0.3px" width="52" height="60" viewBox="741.5 36 52 60">
 <path d="M770.6 59V46" stroke="#8fd33c" stroke-width="1"/>
 <path d="M770.6 59L758.6 61.4" stroke="#e8485e" stroke-width="1"/>
 <path d="M770.6 59L761 56" stroke="#4a8fe6" stroke-width="1"/>
 <circle cx="760" cy="55.4" r="4" fill="#5a9be8"/>
 <circle cx="758.2" cy="61.6" r="4" fill="#ea4962"/>
 <circle cx="770.6" cy="43.4" r="4.2" fill="#92d43e"/>
 <circle cx="782.8" cy="55.6" r="3.9" fill="#c9485e"/>
 <circle cx="781.2" cy="61.6" r="4" fill="#2867b8"/>
 <circle cx="770.6" cy="74.2" r="3.9" fill="#689f2a"/>
 <g font-family="Liberation Sans, sans-serif" font-size="6.6" text-anchor="middle" fill="#1c1f28"><text x="770.6" y="45.8">Y</text><text x="758.2" y="64">X</text><text x="760" y="57.4" fill="#2a5fa8">Z</text></g>
</svg>
</div>

<!-- OUTPUT PANEL -->
<div style="left:230.6px;top:403.5px;width:564.6px;height:44.5px;background:#333b4f"></div>
<div class="t" style="left:235.1px;top:407px;letter-spacing:0.112px">Output:</div>
<div style="left:739.3px;top:406px;width:24.6px;height:14.4px;background:#262c3b;border-radius:1px"></div>
<div style="left:765.8px;top:406px;width:26.4px;height:14.4px;background:#262c3b;border-radius:1px"></div>
<div class="t" style="left:742.4px;top:407.1px;letter-spacing:-0.391px">Copy</div>
<div class="t" style="left:769.8px;top:407.1px;letter-spacing:-0.253px">Clear</div>
<div style="left:232.5px;top:421.6px;width:560px;height:27px;background:#262c3b"></div>
</div>
</body></html>
